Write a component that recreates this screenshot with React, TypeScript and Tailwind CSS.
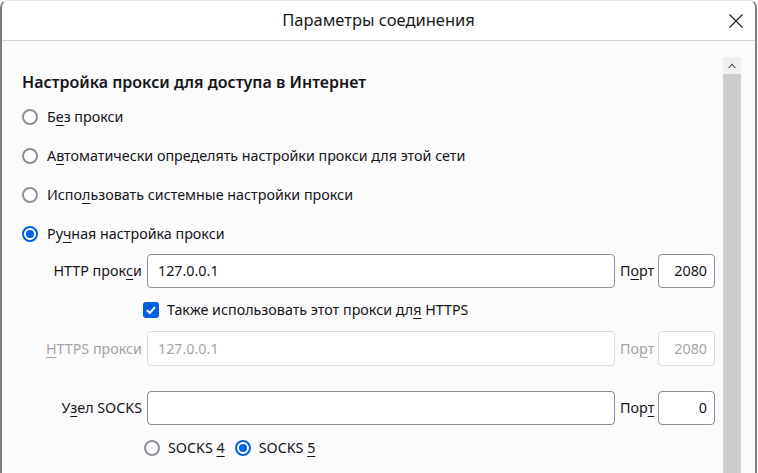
import React from "react";

const font = { fontFamily: '"Segoe UI", "Noto Sans", "Open Sans", sans-serif' };

function U({ children }: { children: React.ReactNode }) {
  return <span className="underline underline-offset-[3px] decoration-1">{children}</span>;
}

function Radio({ checked }: { checked?: boolean }) {
  if (checked) {
    return (
      <span className="flex h-[16px] w-[16px] shrink-0 items-center justify-center rounded-full border-2 border-[#0061e0] bg-white">
        <span className="h-[8px] w-[8px] rounded-full bg-[#0061e0]" />
      </span>
    );
  }
  return <span className="h-[16px] w-[16px] shrink-0 rounded-full border-2 border-[#8f8f9d] bg-white" />;
}

function RadioRow({ checked, children }: { checked?: boolean; children: React.ReactNode }) {
  return (
    <div className="flex h-[39px] items-center gap-[9px] pl-[20px]">
      <Radio checked={checked} />
      <span className="text-[14.3px] text-[#15141a]">{children}</span>
    </div>
  );
}

function FieldRow({
  label,
  value,
  port,
  portLabel,
  disabled,
  h,
}: {
  label: React.ReactNode;
  value: string;
  port: string;
  portLabel: React.ReactNode;
  disabled?: boolean;
  h: string;
}) {
  const txt = disabled ? "text-[#a4a4a8]" : "text-[#15141a]";
  const brd = disabled ? "border-[#dcdcdf]" : "border-[#8f8f9d]";
  return (
    <div className={`flex ${h} items-stretch pl-[20px] pr-[8px]`}>
      <div className={`flex w-[120px] items-center justify-end text-[14.3px] ${txt}`}>{label}</div>
      <div
        className={`ml-[5px] flex flex-1 items-center rounded-[4px] border ${brd} bg-white pl-[10px] text-[14.3px] ${txt}`}
      >
        {value}
      </div>
      <div className={`ml-[5px] flex w-[36px] items-center text-[14.3px] ${txt}`}>{portLabel}</div>
      <div
        className={`ml-[2px] flex w-[57px] items-center justify-end rounded-[4px] border ${brd} bg-white pr-[7px] text-[14.3px] ${txt}`}
      >
        {port}
      </div>
    </div>
  );
}

export default function App() {
  return (
    <div className="h-[473px] w-[758px] overflow-hidden bg-white" style={font}>
      <div className="flex h-[473px] w-[757px] flex-col overflow-hidden rounded-t-[8px] border-x-2 border-t border-[#7d7d7d] border-t-[#e6e6e6] bg-[#fbfbfb]">
        <div className="relative flex h-[40px] shrink-0 items-center justify-center border-b border-[#d4d4d4] bg-white">
          <span className="text-[16.5px] text-[#1b1b1b]">Параметры соединения</span>
          <svg
            className="absolute right-[12px] top-[13px]"
            width="14"
            height="14"
            viewBox="0 0 14 14"
            fill="none"
            stroke="#1a1a1a"
            strokeWidth="1.1"
          >
            <path d="M0.5 0.5 L13.5 13.5 M13.5 0.5 L0.5 13.5" />
          </svg>
        </div>
        <div className="flex flex-1 overflow-hidden">
          <div className="flex flex-1 flex-col">
            <div className="mt-[29px] flex h-[24px] items-center pl-[20px] text-[16px] font-semibold text-[#15141a]">
              Настройка прокси для доступа в Интернет
            </div>
            <div className="mt-[3px]">
              <RadioRow>
                Б<U>е</U>з прокси
              </RadioRow>
              <RadioRow>
                А<U>в</U>томатически определять настройки прокси для этой сети
              </RadioRow>
              <RadioRow>
                Испо<U>л</U>ьзовать системные настройки прокси
              </RadioRow>
              <RadioRow checked>
                Ру<U>ч</U>ная настройка прокси
              </RadioRow>
            </div>
            <div className="mt-[1px]">
              <FieldRow
                h="h-[34px]"
                label={
                  <>
                    HTTP прок<U>с</U>и
                  </>
                }
                value="127.0.0.1"
                portLabel={
                  <>
                    П<U>о</U>рт
                  </>
                }
                port="2080"
              />
            </div>
            <div className="flex h-[43px] items-center gap-[8px] pl-[141px]">
              <span className="flex h-[16px] w-[16px] items-center justify-center rounded-[3px] bg-[#0061e0]">
                <svg width="12" height="12" viewBox="0 0 12 12" fill="none" stroke="white" strokeWidth="2">
                  <path d="M2 6.2 L4.8 9 L10 3.2" />
                </svg>
              </span>
              <span className="text-[14.3px] text-[#15141a]">
                Также использовать этот прокси дл<U>я</U> HTTPS
              </span>
            </div>
            <FieldRow
              h="h-[35px]"
              disabled
              label={
                <>
                  <U>H</U>TTPS прокси
                </>
              }
              value="127.0.0.1"
              portLabel={
                <>
                  По<U>р</U>т
                </>
              }
              port="2080"
            />
            <div className="mt-[25px]">
              <FieldRow
                h="h-[34px]"
                label={
                  <>
                    У<U>з</U>ел SOCKS
                  </>
                }
                value=""
                portLabel={
                  <>
                    Пор<U>т</U>
                  </>
                }
                port="0"
              />
            </div>
            <div className="flex h-[46px] items-center pl-[142px]">
              <Radio />
              <span className="ml-[8px] text-[14.3px] text-[#15141a]">
                SOCKS <U>4</U>
              </span>
              <span className="ml-[10px]">
                <Radio checked />
              </span>
              <span className="ml-[8px] text-[14.3px] text-[#15141a]">
                SOCKS <U>5</U>
              </span>
            </div>
          </div>
          <div className="mr-[14px] mt-[16px] flex w-[18px] flex-col">
            <div className="flex h-[17px] items-center justify-center bg-[#f0f0f0]">
              <svg width="8" height="5" viewBox="0 0 8 5" fill="#505050">
                <path d="M0 5 L4 0.5 L8 5 L6.6 5 L4 2.2 L1.4 5 Z" />
              </svg>
            </div>
            <div className="flex-1 bg-[#cdcdcd]" />
          </div>
        </div>
      </div>
    </div>
  );
}
